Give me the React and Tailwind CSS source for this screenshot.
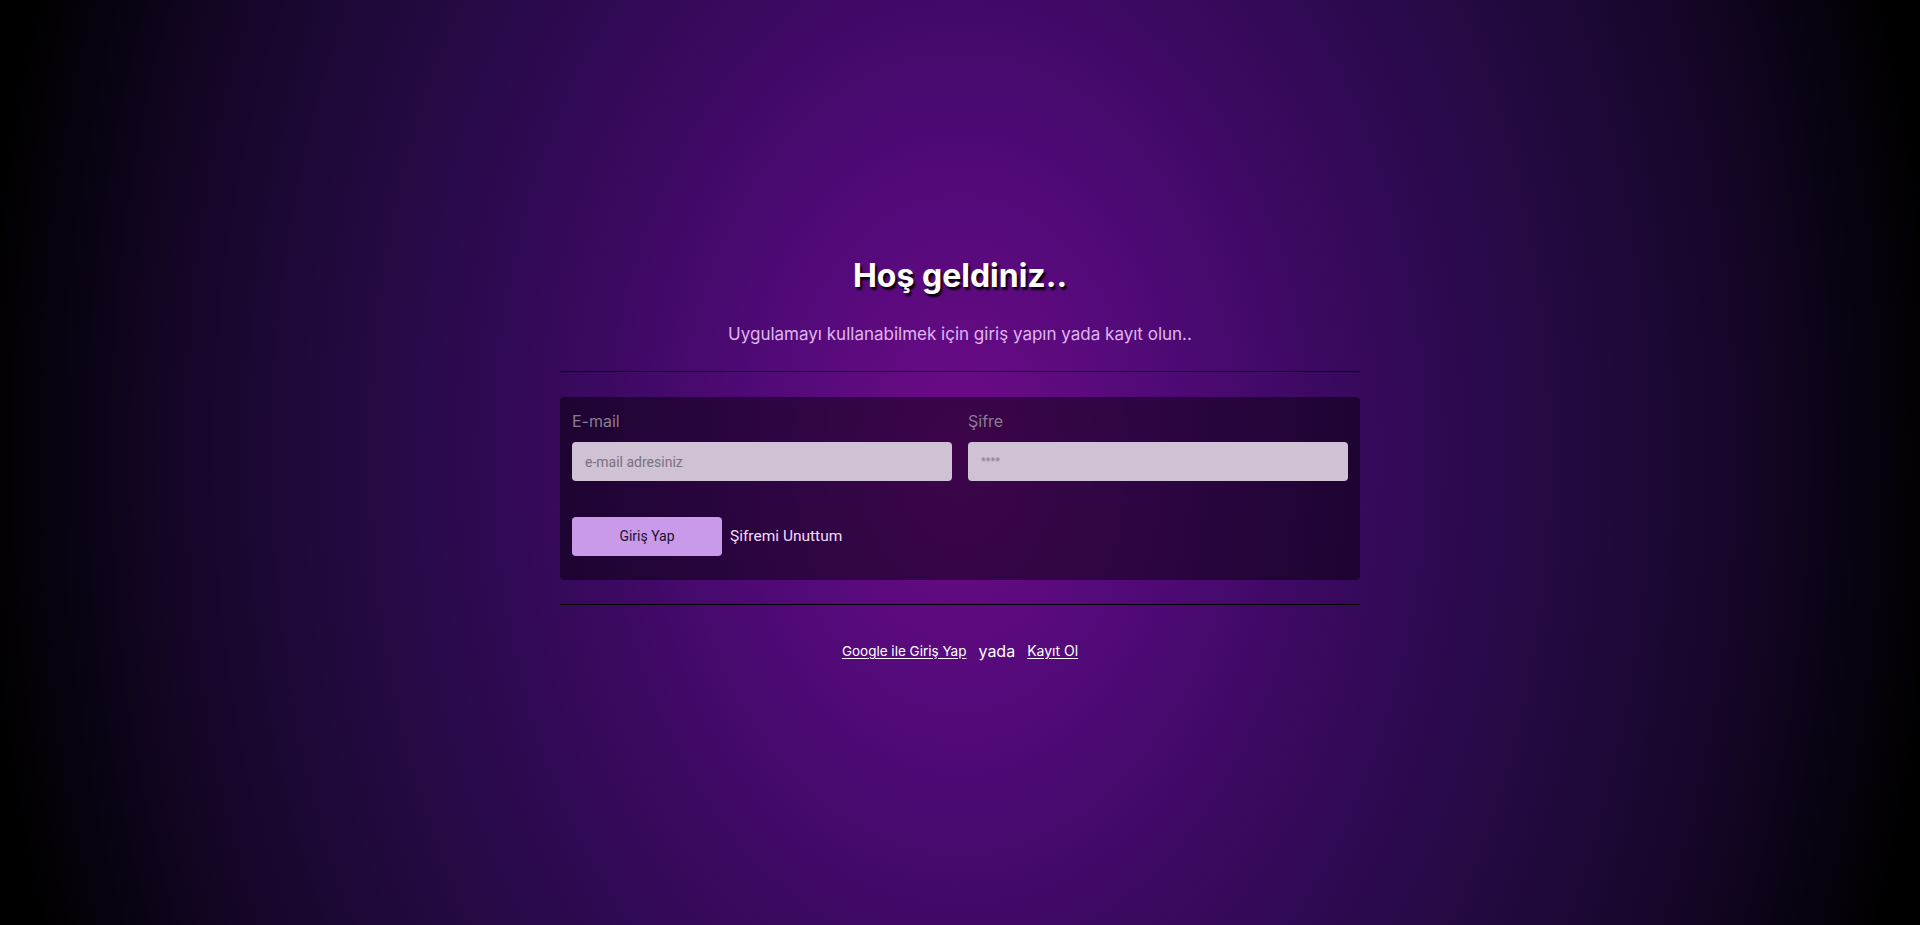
import React from 'react';

const sans = "font-['Inter','Noto_Sans',sans-serif]";
const roboto = "font-['Roboto','Liberation_Sans',sans-serif]";

export default function App() {
  return (
    <div
      className={`min-h-screen w-full bg-[radial-gradient(ellipse_980px_1400px_at_50%_49%,#6f0a88_0%,#540a7a_18%,#3a0960_38%,#260a46_58%,#150628_80%,#000_100%)] ${sans}`}
    >
      <div className="mx-auto flex w-[800px] flex-col pt-[252px]">
        {/* Title */}
        <h1 className="text-center text-[32px] font-bold leading-[48px] text-white [text-shadow:2px_3px_2px_rgba(0,0,0,0.9)]">
          Hoş geldiniz..
        </h1>
        <p className="mt-[22px] text-center text-[17px] leading-6 text-[#e0b4f2]">
          Uygulamayı kullanabilmek için giriş yapın yada kayıt olun..
        </p>

        <div className="mt-[25px] h-px bg-black" />

        {/* Login form */}
        <form className="mt-[25px] rounded bg-black/45 px-3 pt-3 pb-6">
          <div className="grid grid-cols-2 gap-4">
            <div className="flex flex-col">
              <label htmlFor="email" className="mb-[9px] text-[16px] leading-6 text-[#8c7c92]">
                E-mail
              </label>
              <input
                id="email"
                type="email"
                placeholder="e-mail adresiniz"
                className={`h-[39px] rounded bg-[#cfc2d4] px-[13px] text-[14px] text-[#333] placeholder:text-[#7a7080] outline-none ${roboto}`}
              />
            </div>
            <div className="flex flex-col">
              <label htmlFor="password" className="mb-[9px] text-[16px] leading-6 text-[#8c7c92]">
                Şifre
              </label>
              <input
                id="password"
                type="password"
                placeholder="****"
                className={`h-[39px] rounded bg-[#cfc2d4] px-[13px] text-[11px] text-[#333] placeholder:text-[#8a8090] outline-none ${roboto}`}
              />
            </div>
          </div>

          <div className="mt-9 flex items-center gap-2">
            <button
              type="button"
              className={`h-[39px] w-[150px] rounded bg-[#c99aea] text-[14px] text-[#1c1030] ${roboto}`}
            >
              Giriş Yap
            </button>
            <a href="#" className={`text-[15.5px] text-[#f3dcfb] ${roboto}`}>
              Şifremi Unuttum
            </a>
          </div>
        </form>

        <div className="mt-6 h-px bg-black" />

        {/* Footer links */}
        <div className="mt-[34px] flex items-center justify-center gap-3 leading-6 text-white">
          <a href="#" className="text-[13.5px] underline underline-offset-2">
            Google ile Giriş Yap
          </a>
          <span className="text-[16px]">yada</span>
          <a href="#" className="text-[14px] underline underline-offset-2">
            Kayıt Ol
          </a>
        </div>
      </div>
    </div>
  );
}
